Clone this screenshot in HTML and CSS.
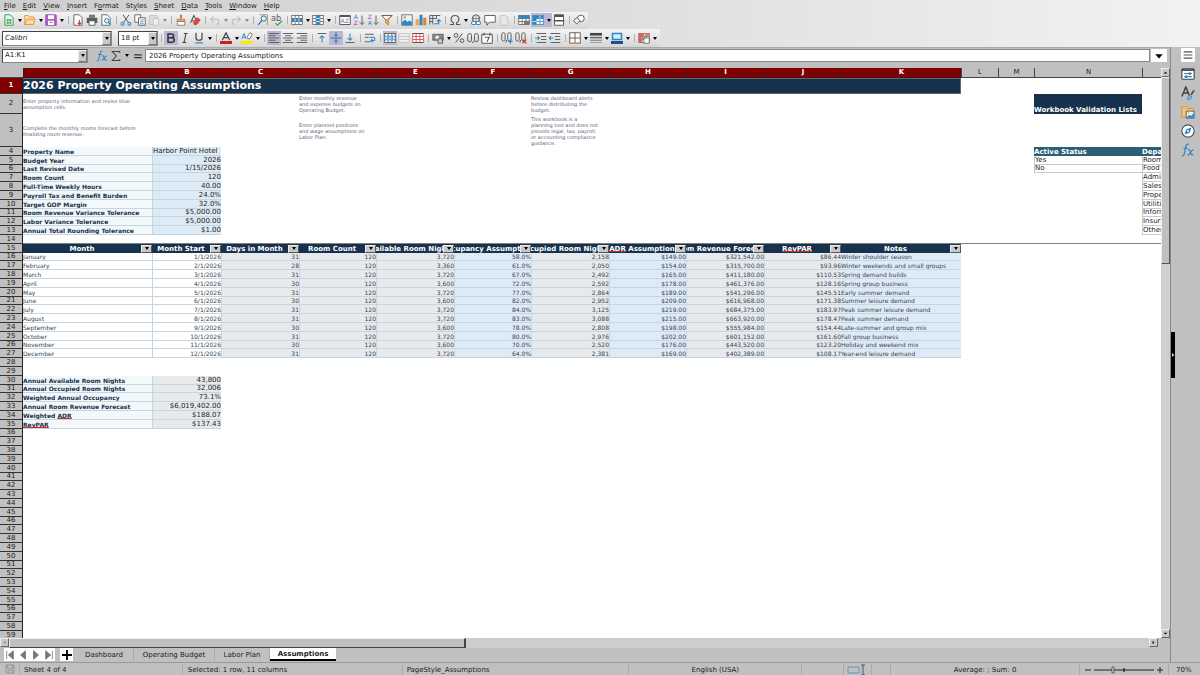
FILE: index.html
```html
<!DOCTYPE html>
<html lang="en">
<head>
<meta charset="utf-8">
<title>2026 Property Operating Assumptions</title>
<link rel="stylesheet" href="styles.css">
</head>
<body>
<header class="top">
  <nav class="menu">
    <button><u>F</u>ile</button><button><u>E</u>dit</button><button><u>V</u>iew</button><button><u>I</u>nsert</button><button>F<u>o</u>rmat</button><button>St<u>y</u>les</button><button><u>S</u>heet</button><button><u>D</u>ata</button><button><u>T</u>ools</button><button><u>W</u>indow</button><button><u>H</u>elp</button>
  </nav>
  <div class="toolbar" id="standard"></div>
  <div class="toolbar toolbar-format">
    <div class="combo combo-font"><select aria-label="Font name"><option>Calibri</option></select><span class="combo-arrow"></span></div>
    <div class="combo combo-size"><select aria-label="Font size"><option>18 pt</option></select><span class="combo-arrow"></span></div>
    <div class="tools" id="formatting"></div>
  </div>
</header>
<div class="work">
  <main class="main">
    <div class="formula">
      <div class="combo combo-name"><select aria-label="Name box"><option>A1:K1</option></select><span class="combo-arrow"></span></div>
      <button class="fx" aria-label="Function wizard"><svg viewBox="0 0 16 16"><path d="M1 14.500c2 .5 2.600-1 3-3.500l1.500-7C6 1.500 7 .8 9 1.500M2.800 6h5M8 8c2-1 2 0 3 3s1.500 3 3 2M14.500 8c-2-.5-3 2-4 3.500S8.500 14 7.500 13.500" fill="none" stroke="#2f86c5" stroke-width="1.400"/></svg></button>
      <button class="sum" aria-label="Select function"><svg viewBox="0 0 16 16"><path d="M13 4V2H3l5.500 6L3 14h10v-2" fill="none" stroke="#444" stroke-width="1.400"/></svg><i class="caret"></i></button>
      <button class="equals" aria-label="Formula"><svg viewBox="0 0 16 16"><path d="M2 6h12M2 10.500h12" stroke="#333" stroke-width="2"/></svg></button>
      <input class="formula-input" aria-label="Input line" value="2026 Property Operating Assumptions">
      <button class="expand" aria-label="Expand formula bar"><svg viewBox="0 0 16 16"><path d="M2 5h12l-6 7z"/></svg></button>
    </div>
    <div class="grid-area">
      <div class="sheet-view"><table class="sheet" id="sheet"></table></div>
      <div class="vscroll">
        <button class="scroll-btn" aria-label="Scroll up"><svg viewBox="0 0 8 8"><path d="M2 5h4L4 3z"/></svg></button>
        <div class="vthumb"></div>
        <div class="vtrack"></div>
        <button class="scroll-btn" aria-label="Scroll down"><svg viewBox="0 0 8 8"><path d="M2 3h4L4 5z"/></svg></button>
      </div>
    </div>
    <div class="hscroll">
      <button class="scroll-btn" aria-label="Scroll left"><svg viewBox="0 0 8 8"><path d="M5 2v4L3 4z" fill="#888"/></svg></button>
      <div class="hthumb"></div>
      <div class="htrack"></div>
      <button class="scroll-btn" aria-label="Scroll right"><svg viewBox="0 0 8 8"><path d="M3 2v4l2-2z"/></svg></button>
    </div>
    <div class="tabs">
      <div class="tab-nav">
        <button aria-label="First sheet"><svg viewBox="0 0 12 12"><path d="M2 1v10M10 1v10L4 6z"/></svg></button>
        <button aria-label="Previous sheet"><svg viewBox="0 0 12 12"><path d="M9 1v10L3 6z"/></svg></button>
        <button aria-label="Next sheet"><svg viewBox="0 0 12 12"><path d="M3 1v10l6-5z"/></svg></button>
        <button aria-label="Last sheet"><svg viewBox="0 0 12 12"><path d="M10 1v10M2 1v10l6-5z"/></svg></button>
      </div>
      <button class="tab-add" aria-label="Add sheet"><svg viewBox="0 0 12 12"><path d="M6 1v10M1 6h10" stroke="#000" stroke-width="1.800"/></svg></button>
      <button class="tab tab-dash">Dashboard</button>
      <button class="tab tab-budget">Operating Budget</button>
      <button class="tab tab-labor">Labor Plan</button>
      <button class="tab tab-active">Assumptions</button>
    </div>
  </main>
  <aside class="sidebar">
    <button class="handle" aria-label="Hide sidebar"><svg viewBox="0 0 4 8"><path d="M1 2v4l2.500-2z" fill="#ccc"/></svg></button>
    <div class="deck">
      <button class="deck-menu" aria-label="Sidebar settings"><svg viewBox="0 0 16 16"><path d="M3 4.500h10M3 8h10M3 11.500h10" stroke="#555" stroke-width="1.300"/></svg></button>
      <button aria-label="Properties"><svg viewBox="0 0 16 16"><rect x="1" y="2" width="14" height="12" rx="1" fill="#fff" stroke="#444" stroke-width="1.300"/><path d="M1 3.500h14" stroke="#444" stroke-width="2"/><path d="M3.500 7.500h9M3.500 11h9" stroke="#2f86c5" stroke-width="1.200"/><path d="M9 6h2v3H9zM5 9.500h2v3H5z" fill="#2f86c5"/></svg></button>
      <button aria-label="Styles"><svg viewBox="0 0 16 16"><path d="M1 12 5.500 1l4 10M2.500 8H8" fill="none" stroke="#444" stroke-width="1.700"/><path d="m15 5-3.500 5" stroke="#444" stroke-width="1.800"/><path d="M7 15c1.500-1 .5-3 3-4.500l2.500 2C12 15 9.500 16 7 15z" fill="#7cc0ee" stroke="#2f86c5"/></svg></button>
      <button aria-label="Gallery"><svg viewBox="0 0 16 16"><path d="M1 14V2h5l1 2h7v10z" fill="#f5c283" stroke="#df8a2c"/><path d="M6 7h9v8H6z" fill="#e8f4fd" stroke="#555"/><path d="m6.500 14 3-3 2 1.500L14.500 9v5.500h-8z" fill="#2f86c5"/><circle cx="8.500" cy="9" r="1" fill="#f4b93e"/></svg></button>
      <button aria-label="Navigator"><svg viewBox="0 0 16 16"><circle cx="8" cy="8" r="7" fill="#fff" stroke="#555" stroke-width="1.300"/><path d="m12 4-2 6-6 2 2-6z" fill="#2f86c5"/><circle cx="8" cy="8" r="1.200" fill="#fff"/></svg></button>
      <button aria-label="Functions"><svg viewBox="0 0 16 16"><path d="M1 14.500c2 .5 2.600-1 3-3.500l1.500-7C6 1.500 7 .8 9 1.500M2.800 6h5M8 8c2-1 2 0 3 3s1.500 3 3 2M14.500 8c-2-.5-3 2-4 3.500S8.500 14 7.500 13.500" fill="none" stroke="#2f86c5" stroke-width="1.400"/></svg></button>
    </div>
  </aside>
</div>
<footer class="status">
  <span class="st-save"><svg viewBox="0 0 16 16"><path d="M1.500 1.500h13v13h-11l-2-2zM4 2v5h8V2M5 14v-4h7v4" fill="none" stroke="#8b8b8b" stroke-width="1.300"/></svg></span>
  <span class="st-sheet">Sheet 4 of 4</span>
  <span class="st-sel">Selected: 1 row, 11 columns</span>
  <span class="st-page">PageStyle_Assumptions</span>
  <span class="st-lang">English (USA)</span>
  <span class="st-ins"></span>
  <span class="st-mode"><svg viewBox="0 0 20 12"><path d="M1 3h11v6H1z" fill="none" stroke="#4a9ad0"/><path d="M14 1h4M16 1v10M14 11h4" stroke="#555" fill="none"/></svg></span>
  <span class="st-sig"></span>
  <span class="st-avg">Average: ; Sum: 0</span>
  <span class="st-zoom"><svg viewBox="0 0 80 12"><path d="M1 6h6M73 6h6M76 3v6M10 6h60" stroke="#222" fill="none"/><path d="M40 4v4" stroke="#000"/><path d="M28 3h2v6h-2z" fill="#ddd" stroke="#333" stroke-width=".7"/></svg></span>
  <span class="st-pct">70%</span>
</footer>
<script src="app.js"></script>
</body>
</html>
```
FILE: styles.css
```css
* { box-sizing: border-box; }
body {
  margin: 0;
  height: 100vh;
  display: flex;
  flex-direction: column;
  overflow: hidden;
  background: #c0c0c0;
  color: #1c1c1c;
  font: 7px/9px "DejaVu Sans", sans-serif;
}
button, input, select {
  font: inherit;
  color: inherit;
  margin: 0;
  padding: 0;
  border: 0;
  border-radius: 0;
  background: none;
}
svg { display: block; }

/* menu and toolbars */
.top { background: linear-gradient(90deg, #cdcdcd, #dedede 50%, #f2f2f2); }
.menu { display: flex; gap: 7px; padding: 0 4px; height: 12px; align-items: center; }
.menu u { text-underline-offset: 1px; }
.toolbar {
  display: flex;
  align-items: center;
  width: max-content;
  height: 17px;
  padding: 0 2px;
  background: linear-gradient(#f4f4f4, #d6d6d6);
}
#standard { padding-bottom: 1px; }
.toolbar-format { height: 18px; gap: 6px; }
.tools { display: flex; align-items: center; }
.tool { width: 14px; height: 14px; display: grid; place-items: center; }
.tool svg { width: 12px; height: 12px; }
.tool-on { background: #b9b9d6; }
.drop { width: 7px; height: 14px; display: grid; place-items: center; }
.drop-on { background: #b9b9d6; }
.caret { border: 2px solid transparent; border-top: 3px solid #000; border-bottom: 0; }
.caret-off { border-top-color: #888; }
.sep { width: 6px; height: 8px; display: grid; justify-content: center; }
.sep::before { content: ""; width: 1px; background: #b0b0b0; }
.combo {
  display: grid;
  height: 15px;
  background: #fff;
  border: 1px solid #444;
  border-right-color: #888;
  border-bottom-color: #888;
}
.combo select { grid-area: 1 / 1; appearance: none; padding: 0 2px; width: 100%; }
.combo-arrow {
  grid-area: 1 / 1;
  justify-self: end;
  width: 9px;
  display: grid;
  place-items: center;
  background: #c8c8c8;
  border: 1px solid #777;
  border-top-color: #eee;
  border-left-color: #eee;
  pointer-events: none;
}
.combo-arrow::before { content: ""; border: 2px solid transparent; border-top: 3px solid #000; border-bottom: 0; }
.combo-font { width: 110px; font-style: italic; }
.combo-size { width: 40px; }
.combo-size + .tools { margin-left: -6px; }

/* work area */
.work { flex: 1; min-height: 0; display: flex; }
.main { flex: 1; min-width: 0; display: flex; flex-direction: column; border-right: 1px solid #8a8a8a; }
.formula { display: flex; align-items: center; height: 21px; padding: 0 3px 5px 2px; border-top: 1px solid #aaa; }
.combo-name { width: 86px; height: 14px; }
.fx { margin-left: 8px; }
.fx svg, .sum svg, .equals svg { width: 12px; height: 12px; }
.sum { display: flex; align-items: center; gap: 3px; margin-left: 2px; }
.equals { margin: 0 2px 0 4px; }
.equals svg { width: 10px; }
.formula-input { flex: 1; min-width: 0; height: 13px; padding: 0 3px; background: #fff; border: 1px solid #888; }
.expand { width: 16px; height: 13px; background: #fff; margin-left: 1px; display: grid; place-items: center; }
.expand svg { width: 10px; height: 10px; }
.grid-area { flex: 1; min-height: 0; display: flex; }
.sheet-view { flex: 1; min-width: 0; overflow: hidden; background: #fff; }

.sheet { table-layout: fixed; width: 1262px; border-spacing: 0; line-height: 7px; }
.sheet th, .sheet td { padding: 0; white-space: nowrap; overflow: hidden; text-align: left; vertical-align: middle; }
.sheet tr { height: 9px; }
.sheet tr.short { height: 8px; }
.sheet .cols { height: 10px; }
.sheet .cols th {
  text-align: center;
  font-weight: 400;
  background: #c0c0c0;
  border-left: 1px solid #444;
  border-bottom: 1px solid #444;
}
.sheet .cols .picked { background: #800000; color: #fff; font-weight: 700; border-color: #401030; }
.sheet .cols .corner { border-left: 0; }
.sheet .row-head {
  text-align: center;
  font-weight: 400;
  background: #c0c0c0;
  border-right: 1px solid #222;
  border-bottom: 1px solid #333;
}
.sheet .row-head.picked { background: #800000; color: #fff; font-weight: 700; }
.sheet .r1 { height: 16px; }
.sheet .r2 { height: 20px; }
.sheet .r3 { height: 33px; }
.sheet .r14 td { border-bottom: 1px solid #808080; }
.sheet .title {
  background: #17324d;
  color: #fff;
  font-size: 11px;
  line-height: 12px;
  font-weight: 700;
  border: 1px solid #666;
  border-left: 0;
}
.sheet .note { font-size: 5px; line-height: 6px; color: #5b6678; overflow: visible; }
.sheet .lists-title { background: #17324d; color: #fff; font-weight: 700; vertical-align: bottom; }
.sheet .list-head { background: #2b5f75; color: #fff; font-weight: 700; vertical-align: bottom; line-height: 8px; }
.sheet .list { border-left: 1px solid #c9c9c9; border-bottom: 1px solid #c9c9c9; vertical-align: bottom; }
.sheet .label, .sheet .entry, .sheet .month, .sheet .calc, .sheet .assume {
  border-bottom: 1px solid #c8d5de;
  vertical-align: bottom;
}
.sheet .entry, .sheet .calc, .sheet .assume, .sheet .month.right { border-left: 1px solid #c8d5de; }
.sheet .label { background: #f3f8fa; color: #17324d; font-weight: 700; font-size: 6px; }
.sheet .entry { background: #ddebf7; }
.sheet .calc { background: #e7eaed; }
.sheet .assume { background: #ddebf7; }
.sheet .right { text-align: right; }
.sheet .data { font-size: 6px; color: #38424e; }
.sheet .data.note-text { border-left: 0; }
.sheet .spell { text-decoration: underline 1px #dd2222; text-underline-offset: 0; text-decoration-skip-ink: none; }
.sheet .filter { background: #17324d; color: #fff; font-weight: 700; }
.filter-box { display: flex; height: 8px; }
.filter-text { flex: 1; min-width: 0; display: flex; justify-content: center; overflow: hidden; line-height: 8px; }
.filter-btn {
  width: 11px;
  height: 8px;
  display: grid;
  place-items: center;
  background: #c8c8c8;
  border: 1px solid #555;
  border-top-color: #eee;
  border-left-color: #eee;
}

/* scroll bars */
.vscroll { width: 9px; display: flex; flex-direction: column; background: #c0c0c0; }
.scroll-btn {
  width: 9px;
  height: 9px;
  display: grid;
  place-items: center;
  background: #c8c8c8;
  border: 1px solid #666;
  border-top-color: #eee;
  border-left-color: #eee;
}
.scroll-btn svg { width: 7px; height: 7px; }
.vthumb { flex: 34; background: #c0c0c0; border: 1px solid #555; border-top-color: #eee; border-left-color: #eee; }
.vtrack { flex: 67; background: #cfcfcf; }
.hscroll { display: flex; height: 10px; padding-right: 12px; background: #c0c0c0; }
.hthumb { flex: 399; background: #c0c0c0; border: 1px solid #444; border-width: 1px 2px 1px 1px; border-top-color: #eee; border-left-color: #eee; }
.htrack { flex: 601; background: #cdcdcd; }

/* sheet tabs */
.tabs { display: flex; height: 14px; padding-left: 4px; align-items: stretch; }
.tab-nav { display: flex; background: #fff; height: 13px; align-items: center; }
.tab-nav button { width: 12px; display: grid; place-items: center; }
.tab-nav button + button { margin-left: 1px; }
.tab-nav svg { width: 10px; height: 10px; fill: #777; stroke: #777; }
.tab-add { width: 13px; height: 13px; margin-left: 5px; background: #fff; display: grid; place-items: center; }
.tab-add svg { width: 12px; height: 12px; }
.tab { height: 13px; padding-top: 1px; white-space: nowrap; border-right: 1px solid #aaa; }
.tab-dash { width: 61px; padding-left: 2px; }
.tab-budget { width: 81px; }
.tab-labor { width: 55px; }
.tab-active { width: 66px; padding-top: 2px; background: #fff; font-weight: 700; border-right: 0; border-bottom: 2px solid #000; }

/* sidebar */
.sidebar { width: 29px; display: flex; }
.handle { align-self: center; width: 4px; height: 46px; background: #000; }
.deck { flex: 1; display: flex; flex-direction: column; align-items: center; gap: 5px; padding: 1px 0 0 1px; }
.deck button { width: 14px; height: 14px; display: grid; place-items: center; }
.deck svg { width: 14px; height: 14px; }
.deck .deck-menu { background: #fff; }

/* status bar */
.status { display: flex; height: 13px; align-items: center; border-top: 1px solid #999; white-space: nowrap; padding-top: 1px; }
.status span { min-width: 0; height: 11px; line-height: 12px; border-right: 1px solid #aaa; padding: 0 5px; }
.status .st-save { width: 20px; }
.st-save svg { width: 10px; height: 10px; }
.status .st-sheet { flex: 0 1 163px; padding-left: 4px; }
.status .st-sel { flex: 0 1 220px; }
.status .st-page { flex: 1 1 227px; padding-left: 4px; }
.status .st-lang { flex: 0 1 173px; text-align: center; }
.status .st-ins { flex: 0 1 42px; }
.status .st-mode { flex: 0 0 28px; padding: 0 3px; }
.st-mode svg { width: 20px; height: 12px; }
.status .st-sig { flex: 0 1 19px; }
.status .st-avg { flex: 0 1 189px; text-align: center; }
.status .st-zoom { flex: 0 0 89px; padding: 0 4px; }
.st-zoom svg { width: 80px; height: 12px; }
.status .st-pct { width: 31px; border-right: 0; padding: 0 0 0 7px; }
```
FILE: app.js
```js
const BLUE = '#2f86c5', GREY = '#606060';
const line = (d, c = GREY, w = 1.3) => `<path d="${d}" fill="none" stroke="${c}" stroke-width="${w}"/>`;
const fill = (d, c) => `<path d="${d}" fill="${c}"/>`;
const glyph = (t, x, y, s, c = GREY, extra = '') => `<text x="${x}" y="${y}" font-size="${s}" fill="${c}" ${extra}>${t}</text>`;
const grid = (c) => `<rect x="1" y="2" width="14" height="12" fill="#fff" stroke="${c}"/>` + line('M1 6h14M1 10h14M5.500 2v12M10.500 2v12', c, 1);
const page = `<path d="M2.500 1h7l4 4v10h-11z" fill="#fff" stroke="${GREY}" stroke-width="1.200"/>`;

const icons = {
  new: `<path d="M2.500 1h7l4 4v10h-11z" fill="#eaf6ea" stroke="#3c9d4e" stroke-width="1.300"/>` + fill('M5 7h6v6H5z', '#3c9d4e') + line('M5 10h6M8 7v6', '#fff', .8),
  open: `<path d="M1 14V2h5l1 2h6v3" fill="#fbe0b8" stroke="#e8973a" stroke-width="1.300"/><path d="m1 14 3-7h11l-2.500 7z" fill="#fbd7a0" stroke="#e8973a" stroke-width="1.300"/>`,
  save: `<path d="M1 1h13l1 1v13H1z" fill="#b561c4" stroke="#8c3b9e"/>` + fill('M4 1.500h8v5H4zM4 9h8v5.500H4z', '#fff') + fill('M6 10.500h4v1H6z', '#8c3b9e'),
  pdf: page + line('M10 8v6M7.500 11.500 10 14l2.500-2.500', '#d33', 1.600),
  print: fill('M4 1h8v4H4z', '#777') + fill('M1 5h14v7H1z', '#5a5a5a') + `<path d="M4 9h8v6H4z" fill="#fff" stroke="#444"/>`,
  preview: page + `<circle cx="9" cy="9" r="3" fill="#dceefa" stroke="${BLUE}" stroke-width="1.300"/>` + line('m11 11 3 3', BLUE, 1.600),
  cut: line('m4 1 7 10M12 1 5 11', '#555', 1.300) + `<circle cx="3.500" cy="13" r="2" fill="none" stroke="${BLUE}" stroke-width="1.400"/><circle cx="12.500" cy="13" r="2" fill="none" stroke="${BLUE}" stroke-width="1.400"/>`,
  copy: `<path d="M1 1h8v10H1z" fill="#fff" stroke="${GREY}" stroke-width="1.200"/><path d="M6 5h9v10H6z" fill="#fff" stroke="${GREY}" stroke-width="1.200"/>` + line('M8 8h5M8 10.500h5M8 13h5', BLUE, 1),
  paste: `<path d="M2 2h10v12H2z" fill="#ddd" stroke="#bbb"/><path d="M7 6h7v9H7z" fill="#eee" stroke="#bbb"/>`,
  brush: line('M8 1v5', '#d9662b', 2.500) + `<path d="M3 7h10v3H3z" fill="#f3a46f" stroke="#c7662f"/><path d="M3 10h10v5H3z" fill="#fff" stroke="#666"/>`,
  clear: line('M2 12 6.500 2l3 6M4 9h3', '#555', 1.400) + `<path d="m6 11 5-6 4 3-5 6H7z" fill="#e44b3e" stroke="#b52e26"/>`,
  undo: line('M3 7h7c4 0 4 6 0 7M6 3 2.500 7 6 11', '#bcbcbc', 1.500),
  redo: line('M13 7H6c-4 0-4 6 0 7M10 3l3.500 4-3.500 4', '#bcbcbc', 1.500),
  find: line('M3 1h11v14', '#888', 1) + `<circle cx="9" cy="6" r="3.500" fill="#e5f2fb" stroke="#466" stroke-width="1.300"/>` + line('m6.500 8.500-5 6', BLUE, 2),
  spell: glyph('ab', 0, 9, 11) + line('m6 12 2.500 3L15 9', '#3c9d4e', 1.500),
  row: grid('#555') + fill('M1 6h14v4H1z', BLUE) + line('M5.500 6v4M10.500 6v4', '#fff', 1),
  col: grid('#555') + fill('M5.500 2h5v12h-5z', BLUE) + line('M5.500 6h5M5.500 10h5', '#fff', 1),
  sort: `<path d="M1 2h14v12H1z" fill="#fff" stroke="#555" stroke-width="1.300"/>` + fill('M1 2h14v2H1z', '#555') + glyph('A', 2, 12, 8, BLUE) + glyph('Z', 8, 12, 8, '#a23fb5'),
  asc: glyph('A', 1, 7, 8, BLUE) + glyph('Z', 1, 15, 8, '#a23fb5') + line('M12 2v12M9 11l3 3 3-3'),
  desc: glyph('Z', 1, 7, 8, '#a23fb5') + glyph('A', 1, 15, 8, BLUE) + line('M12 2v12M9 11l3 3 3-3'),
  funnel: `<path d="M1 2h14L9.500 8v6l-3-2V8z" fill="#fff" stroke="#555" stroke-width="1.200"/><path d="M9.500 8v6l-3-2V8L14 3" fill="#f6b26b" stroke="#df8a2c"/>`,
  image: `<path d="M1 1h14v14H1z" fill="#e4f2fc" stroke="#555"/>` + fill('m1.500 14.500 0-4 4-3 3 3 3-2 3 2v4z', BLUE) + `<circle cx="5" cy="4.500" r="1.700" fill="#f4a63e"/>`,
  chart: fill('M1 7h4v8H1z', '#f1a23f') + fill('M6 1h4v14H6z', BLUE) + fill('M11 5h4v10h-4z', '#e07d3a'),
  pivot: line('M1 2h14M1 2v12M5 2v4M1 6h9M10 2v4M1 10h4M5 6v8', '#555', 1.200) + line('M7 13h6V8M10.500 10 13 7.500l2.500 2.500', BLUE, 1.500),
  omega: line('M1 14h5v-2C1 9 2 2 8 2s7 7 2 10v2h5', '#555', 1.400),
  link: `<circle cx="8" cy="6" r="5" fill="#fff" stroke="#555" stroke-width="1.200"/>` + line('M3 6h10M8 1v10M5 2.500v7M11 2.500v7', '#555', .8) + `<rect x="2" y="10" width="6" height="4" rx="2" fill="#fff" stroke="${BLUE}" stroke-width="1.400"/><rect x="8" y="10" width="6" height="4" rx="2" fill="#fff" stroke="${BLUE}" stroke-width="1.400"/>`,
  comment: `<path d="M1 2h14v9H7l-3 4v-4H1z" fill="#fff" stroke="#555" stroke-width="1.200"/>`,
  headers: `<path d="M3 2h7l3 3v10H3z" fill="#e8e8e8" stroke="#bbb"/>`,
  area: grid('#555') + fill('M1 2h14v4H1z', BLUE) + `<path d="M8 9h7v5H8z" fill="#777"/>`,
  freeze: grid(BLUE) + fill('M1 2h14v4H1zM1 2h4.500v12H1z', BLUE) + line('M1 10h5M10.500 2v4', '#fff', 1),
  split: `<path d="M2 1h12v14H2z" fill="#fff" stroke="#555" stroke-width="1.200"/>` + fill('M2 1h12v3H2z', '#555') + line('M1 9h14', '#555', 2),
  shapes: `<circle cx="10.500" cy="6" r="4.500" fill="#fff" stroke="#555" stroke-width="1.200"/><path d="M5 4.500 9.500 9 5 13.500.800 9z" fill="#eee" stroke="#555" stroke-width="1.200"/>`,
  bold: line('M4 2v12M3 2.500h5.500c4 0 4 5 0 5H4h5c4.500 0 4.500 6 0 6H3', '#333', 2),
  italic: line('M6.500 2h5M4.500 14h5M9.300 2 6.700 14', '#444', 1.500),
  underline: line('M4 1v7c0 4 8 4 8 0V1', '#444', 1.600) + line('M3 14.500h10', BLUE, 1.600),
  color: line('M3 11 8 1l5 10M5 7.500h6', '#444', 1.700) + fill('M0 12h16v4H0z', '#c9211e'),
  mark: line('M1 9 4 2l2.500 7M2 7h4', BLUE, 1.200) + `<path d="m8 7 4-6 3 2-3 6H9z" fill="#fff" stroke="#555"/>` + fill('M0 12h16v4H0z', '#f5ed00'),
  left: line('M1 2h14M1 5h9M1 8h14M1 11h9M1 14h14'),
  center: line('M1 2h14M4 5h8M1 8h14M4 11h8M1 14h14'),
  right: line('M1 2h14M6 5h9M1 8h14M6 11h9M1 14h14'),
  top: line('M2 2h12') + line('M8 14V5M5 8l3-3 3 3', BLUE, 1.400),
  middle: line('M1 8h14') + line('M8 0v5M6 3.500 8 6l2-2.500M8 16v-5M6 12.500 8 10l2 2.500', BLUE, 1.400),
  bottom: line('M2 14h12') + line('M8 2v9M5 8l3 3 3-3', BLUE, 1.400),
  wrap: line('M1 3h12M1 7h5M1 13h7') + line('M7 7h6c2 0 2 4.500 0 4.500H9.500M11.500 9l-2.500 2.500 2.500 2.500', BLUE, 1.400),
  mergeCenter: grid('#444') + fill('M1 5.500h14v5H1z', '#cce7fa') + line('M1 5.500h14v5H1zM4 8h8M6 6.500 4 8l2 1.500M10 6.500 12 8l-2 1.500', BLUE, 1),
  merge: `<path d="M1 2h14v12H1z" fill="#eee" stroke="#bbb"/>` + line('M1 6h14M1 10h14', '#bbb', 1),
  unmerge: grid('#cf3b3b') + line('M1 2h14M1 14h14', '#444', 1),
  currency: `<path d="M1 3h14v8H1z" fill="#888" stroke="#555"/><circle cx="7" cy="7" r="2.500" fill="#eee"/><path d="M8 9h6v6H8z" fill="#ccc" stroke="#444"/>`,
  percent: `<circle cx="4" cy="4.500" r="2.500" fill="none" stroke="#555" stroke-width="1.300"/><circle cx="12" cy="11.500" r="2.500" fill="none" stroke="#555" stroke-width="1.300"/>` + line('m12.500 2-9 12', '#555'),
  number: `<rect x="1" y="2" width="5" height="11" rx="2.500" fill="none" stroke="#555" stroke-width="1.300"/><rect x="10" y="2" width="5" height="11" rx="2.500" fill="none" stroke="#555" stroke-width="1.300"/>` + line('m8.500 12-1 3', '#555'),
  date: `<path d="M1 3h14v12H1z" fill="#fff" stroke="#555" stroke-width="1.300"/>` + line('M4 1v4M12 1v4M5 7h6l-3 6', '#555', 1.400),
  addDec: `<rect x="1" y="1" width="4.500" height="11" rx="2.200" fill="none" stroke="#555" stroke-width="1.200"/><rect x="9" y="1" width="4.500" height="11" rx="2.200" fill="none" stroke="#555" stroke-width="1.200"/>` + line('m7.500 11-1 3', '#444') + line('M12.500 9.500v6M9.500 12.500h6', BLUE, 1.600),
  delDec: `<rect x="1" y="1" width="4.500" height="11" rx="2.200" fill="none" stroke="#555" stroke-width="1.200"/><rect x="9" y="1" width="4.500" height="11" rx="2.200" fill="none" stroke="#555" stroke-width="1.200"/>` + line('m7.500 11-1 3', '#444') + line('m10 10 5 5M15 10l-5 5', '#d33', 1.600),
  indent: line('M2 2h13M8 6h7M8 10h7M2 14h13') + line('M0 8h6M3.500 5.500 6 8l-2.500 2.500', BLUE, 1.400),
  outdent: line('M2 2h13M8 6h7M8 10h7M2 14h13') + line('M6 8H0M2.500 5.500 0 8l2.500 2.500', BLUE, 1.400),
  borders: `<path d="M1 1h14v14H1z" fill="#fff" stroke="#555" stroke-width="1.200"/>` + line('M8 1v14M1 8h14', '#555', 1.200) + line('M1 15h14', '#e8873a', 1.500),
  lines: line('M0 3h16', '#444', 3.500) + line('M0 7.500h16', '#666', 2) + line('M0 11h16', '#777', 1.400) + line('M0 14h16', '#888', 1),
  borderColor: `<path d="M2 2h12v8H2z" fill="#d8ecf9" stroke="${BLUE}" stroke-width="2"/>` + fill('M0 12h16v4H0z', '#1f4f80'),
  cond: grid('#666') + fill('M1 2h7v4H1z', '#e35d5d') + fill('M1 6h4v8H1z', '#e35d5d') + fill('M9 2h6v4H9z', '#ea7777') + fill('M5.500 6h4v4h-4z', '#6dbb6d') + `<path d="M8 8h7v7H8z" fill="#fff" stroke="#555"/>`
};

// "v" opens a menu, "|" separates groups, "*" marks an active tool, "-" a disabled menu
function buildBar(id, spec) {
  document.getElementById(id).innerHTML = spec.split(' ').map(t => {
    if (t === '|') return '<span class="sep"></span>';
    if (t[0] === 'v') return `<button class="drop${t === 'v*' ? ' drop-on' : ''}" aria-label="More"><i class="caret${t === 'v-' ? ' caret-off' : ''}"></i></button>`;
    const on = t.endsWith('*'), name = t.replace('*', '');
    return `<button class="tool${on ? ' tool-on' : ''}" aria-label="${name}"><svg viewBox="0 0 16 16">${icons[name]}</svg></button>`;
  }).join('');
}
buildBar('standard', 'new v open v save v | pdf print preview | cut copy paste v- | brush clear | undo v- redo v- | find spell | row v col v | sort asc desc funnel | image chart pivot | omega v link comment headers | area freeze* v* split | shapes');
buildBar('formatting', '| bold* italic underline v | color v mark v | left* center right | top middle* bottom | wrap | mergeCenter* merge unmerge | currency v percent number date | addDec delDec | indent outdent | borders v lines v borderColor v | cond v');

const widths = [23, 129, 69, 78, 77, 78, 77, 78, 77, 78, 77, 120, 37, 36, 108, 120];
const letters = 'ABCDEFGHIJKLMNO'.split('');
const cells = {};
const put = (ref, cls, html) => { cells[ref] = [cls, html]; };

put('A2', 'note', 'Enter property information and revise blue<br>assumption cells.');
put('D2', 'note', 'Enter monthly revenue<br>and expense budgets on<br>Operating Budget.');
put('G2', 'note', 'Review dashboard alerts<br>before distributing the<br>budget.');
put('A3', 'note', 'Complete the monthly rooms forecast before<br>finalizing room revenue.');
put('D3', 'note', 'Enter planned positions<br>and wage assumptions on<br>Labor Plan.');
put('G3', 'note', 'This workbook is a<br>planning tool and does not<br>provide legal, tax, payroll,<br>or accounting compliance<br>guidance.');
put('N2', 'lists-title', 'Workbook Validation Lists');
put('N4', 'list-head', 'Active Status');
put('O4', 'list-head', 'Department');
put('N5', 'list', 'Yes');
put('N6', 'list', 'No');
['Rooms', 'Food and Beverage', 'Administrative', 'Sales and Marketing', 'Property Operations', 'Utilities', 'Information', 'Insurance', 'Other']
  .forEach((t, i) => put('O' + (5 + i), 'list', t));

[['Property Name', 'Harbor Point Hotel'], ['Budget Year', '2026'], ['Last Revised Date', '1/15/2026'], ['Room Count', '120'],
 ['Full-Time Weekly Hours', '40.00'], ['Payroll Tax and Benefit Burden', '24.0%'], ['Target GOP Margin', '32.0%'],
 ['Room Revenue Variance Tolerance', '$5,000.00'], ['Labor Variance Tolerance', '$5,000.00'], ['Annual Total Rounding Tolerance', '$1.00']]
  .forEach(([a, b], i) => { put('A' + (4 + i), 'label', a); put('B' + (4 + i), i ? 'entry right' : 'entry', b); });

['Month', 'Month Start', 'Days in Month', 'Room Count', 'Available Room Nights', 'Occupancy Assumption', 'Occupied Room Nights',
 '<span class="spell">ADR</span>&nbsp;Assumption', 'Room Revenue Forecast', '<span class="spell">RevPAR</span>', 'Notes']
  .forEach((t, i) => put(letters[i] + '15', 'filter', `<div class="filter-box"><div class="filter-text"><span>${t}</span></div><button class="filter-btn" aria-label="Filter"><i class="caret"></i></button></div>`));

const months = `January|31|3,720|58.0%|2,158|149|321,542|86.44|Winter shoulder season
February|28|3,360|61.0%|2,050|154|315,700|93.96|Winter weekends and small groups
March|31|3,720|67.0%|2,492|165|411,180|110.53|Spring demand builds
April|30|3,600|72.0%|2,592|178|461,376|128.16|Spring group business
May|31|3,720|77.0%|2,864|189|541,296|145.51|Early summer demand
June|30|3,600|82.0%|2,952|209|616,968|171.38|Summer leisure demand
July|31|3,720|84.0%|3,125|219|684,375|183.97|Peak summer leisure demand
August|31|3,720|83.0%|3,088|215|663,920|178.47|Peak summer demand
September|30|3,600|78.0%|2,808|198|555,984|154.44|Late-summer and group mix
October|31|3,720|80.0%|2,976|202|601,152|161.60|Fall group business
November|30|3,600|70.0%|2,520|176|443,520|123.20|Holiday and weekend mix
December|31|3,720|64.0%|2,381|169|402,389|108.17|Year-end leisure demand`.split('\n').map(r => r.split('|'));
months.forEach(([m, days, avail, occ, sold, adr, rev, revpar, note], i) => {
  const r = 16 + i;
  put('A' + r, 'data month', m);
  put('B' + r, 'data month right', `${i + 1}/1/2026`);
  put('C' + r, 'data calc right', days);
  put('D' + r, 'data calc right', '120');
  put('E' + r, 'data calc right', avail);
  put('F' + r, 'data assume right', occ);
  put('G' + r, 'data calc right', sold);
  put('H' + r, 'data assume right', `$${adr}.00`);
  put('I' + r, 'data calc right', `$${rev}.00`);
  put('J' + r, 'data calc right', '$' + revpar);
  put('K' + r, 'data assume note-text', note);
});
[['Annual Available Room Nights', '43,800'], ['Annual Occupied Room Nights', '32,006'], ['Weighted Annual Occupancy', '73.1%'],
 ['Annual Room Revenue Forecast', '$6,019,402.00'], ['Weighted <span class="spell">ADR</span>', '$188.07'], ['<span class="spell">RevPAR</span>', '$137.43']]
  .forEach(([a, b], i) => { put('A' + (30 + i), 'label', a); put('B' + (30 + i), 'calc right', b); });

let html = '<colgroup>' + widths.map(w => `<col style="width:${w}px">`).join('') + '</colgroup>';
html += '<tr class="cols"><th class="corner"></th>' + letters.map((l, i) => `<th class="${i < 11 ? 'picked' : ''}">${l === 'O' ? '' : l}</th>`).join('') + '</tr>';
for (let r = 1; r <= 59; r++) {
  html += `<tr class="r${r}${r > 3 && r % 5 === 1 ? ' short' : ''}"><th class="row-head${r === 1 ? ' picked' : ''}">${r}</th>`;
  if (r === 1) {
    html += '<td class="title" colspan="11">2026 Property Operating Assumptions</td><td colspan="4"></td>';
  } else {
    letters.forEach(l => {
      const [cls, text] = cells[l + r] || ['', ''];
      html += `<td class="${cls}">${text}</td>`;
    });
  }
  html += '</tr>';
}
document.getElementById('sheet').innerHTML = html;
```
